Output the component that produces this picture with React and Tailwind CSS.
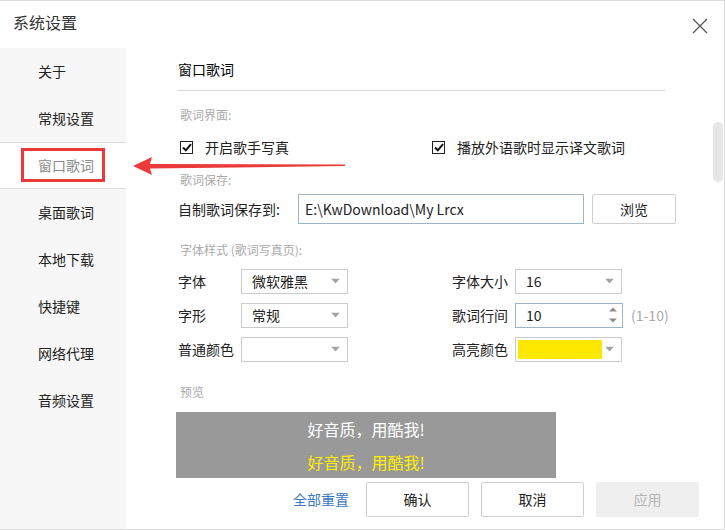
import React from 'react';

const sideItems = ['关于', '常规设置', '窗口歌词', '桌面歌词', '本地下载', '快捷键', '网络代理', '音频设置'];

const Caret = () => (
  <svg width="9" height="5" viewBox="0 0 9 5" className="absolute right-[7px] top-1/2 -translate-y-1/2">
    <path d="M0 0 H9 L4.5 5 Z" fill="#a0a4a8" />
  </svg>
);

const Check = () => (
  <div className="flex h-[13px] w-[13px] items-center justify-center border border-[#222] bg-white">
    <svg width="10" height="9" viewBox="0 0 10 9">
      <path d="M1 4.5 L3.8 7.3 L9 1.2" fill="none" stroke="#111" strokeWidth="2" />
    </svg>
  </div>
);

const Select = ({ children }) => (
  <div className="relative flex h-[25px] w-[107px] items-center border border-[#c9cdd1] bg-white pl-[10px] text-[14px] text-[#222]">
    {children}
    <Caret />
  </div>
);

const App = () => {
  return (
    <div className="relative h-[530px] w-[725px] overflow-hidden bg-white font-['Noto_Sans_CJK_SC','Microsoft_YaHei',sans-serif] text-[#333]">
      <div className="flex h-[530px] w-[725px] flex-col border-t border-r border-b border-[#dcdcdc]">
        {/* title bar */}
        <div className="flex h-[47px] items-center justify-between pl-[13px] pr-[16px]">
          <span className="-mt-[5px] text-[16px] text-[#333]">系统设置</span>
          <svg width="16" height="16" viewBox="0 0 16 16" className="mt-[2px]">
            <path d="M1 1 L15 15 M15 1 L1 15" stroke="#555" strokeWidth="1.3" />
          </svg>
        </div>

        <div className="flex flex-1">
          {/* sidebar */}
          <div className="w-[126px] bg-[#f7f7f7]">
            {sideItems.map((item, i) => (
              <div
                key={item}
                className={`flex h-[47px] items-center pl-[38px] text-[14px] ${i === 2 ? 'border-y border-[#dcdcdc] bg-white text-[#8a8a8a]' : 'text-[#222]'}`}
              >
                {item}
              </div>
            ))}
          </div>

          {/* content */}
          <div className="relative flex-1">
            <div className="ml-[52px] w-[530px]">
              <div className="flex h-[43px] w-[487px] items-center border-b border-[#d6d6d6] pt-[1px] text-[14px] text-[#000]">
                窗口歌词
              </div>

              <div className="mt-[12px] flex h-[24px] items-center pl-[2px] text-[12px] text-[#aaa]">歌词界面:</div>

              <div className="mt-[8px] flex h-[24px] items-center pl-[2px] text-[14px] text-[#222]">
                <Check />
                <span className="ml-[12px]">开启歌手写真</span>
                <div className="ml-[143px]"><Check /></div>
                <span className="ml-[12px]">播放外语歌时显示译文歌词</span>
              </div>

              <div className="mt-[9px] flex h-[24px] items-center pl-[2px] text-[12px] text-[#aaa]">歌词保存:</div>

              <div className="mt-[2px] flex h-[30px] items-center text-[14px] text-[#222]">
                <span className="w-[120px]">自制歌词保存到:</span>
                <div className="flex h-[30px] w-[286px] items-center border border-[#9cb5c6] pl-[6px]">E:\KwDownload\My Lrcx</div>
                <div className="ml-[8px] flex h-[30px] w-[84px] items-center justify-center rounded-[2px] border border-[#cfcfcf] bg-white">浏览</div>
              </div>

              <div className="mt-[14px] flex h-[24px] items-center pl-[2px] text-[12px] text-[#aaa]">字体样式 (歌词写真页):</div>

              <div className="mt-[6px] flex h-[26px] items-center text-[14px] text-[#222]">
                <span className="w-[63px]">字体</span>
                <Select>微软雅黑</Select>
                <span className="ml-[104px] w-[63px]">字体大小</span>
                <Select>16</Select>
              </div>

              <div className="mt-[8px] flex h-[26px] items-center text-[14px] text-[#222]">
                <span className="w-[63px]">字形</span>
                <Select>常规</Select>
                <span className="ml-[104px] w-[63px]">歌词行间</span>
                <div className="relative flex h-[25px] w-[108px] items-center border border-[#9cb5c6] bg-white pl-[10px]">
                  10
                  <svg width="8" height="17" viewBox="0 0 8 17" className="absolute right-[5px] top-1/2 -translate-y-1/2">
                    <path d="M0 5 L4 1 L8 5 Z M0 12 L8 12 L4 16 Z" fill="#8a8e92" />
                  </svg>
                </div>
                <span className="ml-[8px] text-[#aaa]">(1-10)</span>
              </div>

              <div className="mt-[8px] flex h-[26px] items-center text-[14px] text-[#222]">
                <span className="w-[63px]">普通颜色</span>
                <Select></Select>
                <span className="ml-[104px] w-[63px]">高亮颜色</span>
                <div className="relative flex h-[25px] w-[107px] items-center border border-[#c9cdd1] bg-white pl-[2px]">
                  <div className="h-[19px] w-[84px] bg-[#ffe800]" />
                  <Caret />
                </div>
              </div>

              <div className="mt-[18px] flex h-[24px] items-center pl-[2px] text-[12px] text-[#aaa]">预览</div>

              <div className="-ml-[2px] mt-[8px] flex h-[66px] w-[380px] flex-col items-center justify-center gap-[11px] bg-[#999] text-[16px] leading-[22px]">
                <span className="text-white">好音质，用酷我!</span>
                <span className="text-[#ffee00]">好音质，用酷我!</span>
              </div>

              <div className="mt-[4px] flex h-[35px] items-center text-[14px]">
                <span className="ml-[115px] text-[#3a78c3]">全部重置</span>
                <div className="ml-[17px] flex h-[35px] w-[103px] items-center justify-center rounded-[2px] border border-[#cfcfcf] bg-white text-[#222]">确认</div>
                <div className="ml-[12px] flex h-[35px] w-[103px] items-center justify-center rounded-[2px] border border-[#cfcfcf] bg-white text-[#222]">取消</div>
                <div className="ml-[12px] flex h-[35px] w-[103px] items-center justify-center rounded-[2px] bg-[#efefef] text-[#b5b5b5]">应用</div>
              </div>
            </div>

            {/* scrollbar thumb */}
            <div className="absolute left-[587px] top-[74px] h-[60px] w-[10px] rounded-full bg-[#e6e6e6]" />
          </div>
        </div>
      </div>

      {/* annotation: red box and arrow */}
      <div className="absolute left-[21px] top-[148px] h-[34px] w-[84px] border-[3px] border-[#ea3a3a]" />
      <svg width="220" height="24" viewBox="0 0 220 24" className="absolute left-[132px] top-[154px]">
        <path d="M1 12 L20 3 L18 10 L213 10.5 L213 12 L18 14.5 L20 21 Z" fill="#ea3a3a" />
      </svg>
    </div>
  );
};

export default App;
